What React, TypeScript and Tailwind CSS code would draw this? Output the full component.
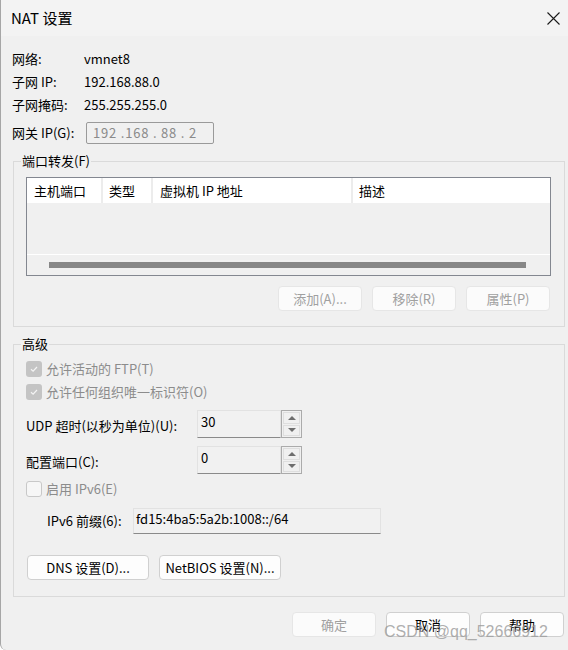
import React from 'react';

const font = { fontFamily: '"Noto Sans CJK SC", "Noto Sans", sans-serif' };

function Btn({ label, w, disabled }: { label: string; w: string; disabled?: boolean }) {
	return (
		<div
			className={`${w} h-[25px] flex items-center justify-center rounded-[4px] border text-[13px] ${
				disabled ? 'bg-[#fbfbfb] border-[#e6e6e6] text-[#a0a0a0]' : 'bg-[#fdfdfd] border-[#d0d0d0] text-black'
			}`}
		>
			{label}
		</div>
	);
}

function Check({ checked, label }: { checked?: boolean; label: string }) {
	return (
		<div className="h-[23px] flex items-center gap-[4px]">
			{checked ? (
				<div className="w-[16px] h-[16px] rounded-[3px] bg-[#c4c4c4] flex items-center justify-center">
					<svg width="10" height="10" viewBox="0 0 10 10">
						<path d="M2 5.2 L4.1 7.2 L8 3" fill="none" stroke="#f4f4f4" strokeWidth="1.2" />
					</svg>
				</div>
			) : (
				<div className="w-[16px] h-[16px] rounded-[3px] border border-[#c8c8c8] bg-[#f6f6f6]" />
			)}
			<span className="text-[13px] text-[#8c8c8c]">{label}</span>
		</div>
	);
}

function Spin({ value }: { value: string }) {
	return (
		<div className="flex h-[28px]">
			<div className="w-[84px] h-full border border-[#e2e2e2] border-b-[#8a8a8a] bg-[#f1f1f1] pl-[3px] pt-[2px] text-[13px] leading-[18px]">
				{value}
			</div>
			<div className="w-[21px] h-full border border-[#ababab] p-px flex flex-col gap-px">
				<div className="flex-1 border border-[#dedede] bg-[#f0f0f0] flex items-center justify-center">
					<svg width="8" height="5" viewBox="0 0 8 5">
						<path d="M0 5 L4 1 L8 5 Z" fill="#6e6e6e" />
					</svg>
				</div>
				<div className="flex-1 border border-[#dedede] bg-[#f0f0f0] flex items-center justify-center">
					<svg width="8" height="5" viewBox="0 0 8 5">
						<path d="M0 0 L8 0 L4 4 Z" fill="#6e6e6e" />
					</svg>
				</div>
			</div>
		</div>
	);
}

export default function App() {
	return (
		<div className="w-[568px] h-[650px] bg-[#f0f0f0] relative overflow-hidden text-black border-l border-[#a6a6a6] rounded-bl-[6px]" style={font}>
			{/* 标题栏 */}
			<div className="h-[36px] bg-[#f3f3f3] flex items-center justify-between pl-[10px] pr-[8px]">
				<span className="text-[15px]">NAT 设置</span>
				<svg width="13" height="13" viewBox="0 0 13 13">
					<path d="M0.5 0.5 L12.5 12.5 M12.5 0.5 L0.5 12.5" stroke="#1a1a1a" strokeWidth="1.1" />
				</svg>
			</div>

			<div className="pl-[11px] text-[13px]">
				<div className="mt-[11px] h-[23px] flex items-center">
					<span className="w-[72px]">网络:</span>
					<span>vmnet8</span>
				</div>
				<div className="h-[23px] flex items-center">
					<span className="w-[72px]">子网 IP:</span>
					<span>192.168.88.0</span>
				</div>
				<div className="h-[24px] flex items-center">
					<span className="w-[72px]">子网掩码:</span>
					<span>255.255.255.0</span>
				</div>
				<div className="mt-[5px] h-[22px] flex items-center">
					<span className="w-[74px]">网关 IP(G):</span>
					<div className="w-[128px] h-[22px] border border-[#9a9a9a] rounded-[2px] bg-[#f0f0f0] pl-[6px] flex items-center text-[#8a8a8a] tracking-[0.8px]">
						192 .168 . 88 . 2
					</div>
				</div>
			</div>

			{/* 端口转发 */}
			<div className="mt-[17px] ml-[12px] w-[552px] h-[166px] border border-[#dadada] relative">
				<span className="absolute -top-[11px] left-[7px] px-[1px] bg-[#f0f0f0] text-[13px] leading-[20px]">端口转发(F)</span>
				<div className="ml-[12px] mt-[15px] w-[525px] h-[99px] border border-[#838790] bg-[#f0f0f0] flex flex-col">
					<div className="h-[25px] bg-white flex text-[13px]">
						<div className="w-[76px] pl-[7px] flex items-center border-r-2 border-[#ececec]">主机端口</div>
						<div className="w-[50px] pl-[6px] flex items-center border-r-2 border-[#ececec]">类型</div>
						<div className="w-[200px] pl-[7px] flex items-center border-r-2 border-[#ececec]">虚拟机 IP 地址</div>
						<div className="flex-1 pl-[6px] flex items-center">描述</div>
					</div>
					<div className="h-[51px]" />
					<div className="h-px bg-white" />
					<div className="flex-1 flex items-center pl-[22px]">
						<div className="w-[477px] h-[6px] bg-[#878787]" />
					</div>
				</div>
				<div className="mt-[10px] mr-[14px] flex justify-end gap-[10px]">
					<Btn label="添加(A)..." w="w-[84px]" disabled />
					<Btn label="移除(R)" w="w-[84px]" disabled />
					<Btn label="属性(P)" w="w-[84px]" disabled />
				</div>
			</div>

			{/* 高级 */}
			<div className="mt-[17px] ml-[12px] w-[552px] h-[253px] border border-[#dadada] relative">
				<span className="absolute -top-[11px] left-[7px] px-[1px] bg-[#f0f0f0] text-[13px] leading-[20px]">高级</span>
				<div className="pl-[12px] pt-[12px] flex flex-col">
					<Check checked label="允许活动的 FTP(T)" />
					<Check checked label="允许任何组织唯一标识符(O)" />
					<div className="mt-[7px] h-[28px] flex items-center text-[13px]">
						<span className="w-[171px] pt-[4px]">UDP 超时(以秒为单位)(U):</span>
						<Spin value="30" />
					</div>
					<div className="mt-[8px] h-[28px] flex items-center text-[13px]">
						<span className="w-[171px] pt-[4px]">配置端口(C):</span>
						<Spin value="0" />
					</div>
					<div className="mt-[3px]">
						<Check label="启用 IPv6(E)" />
					</div>
					<div className="mt-[8px] ml-[21px] h-[26px] flex items-center text-[13px]">
						<span className="w-[86px]">IPv6 前缀(6):</span>
						<div className="w-[248px] h-[26px] border border-[#e2e2e2] border-b-[#8a8a8a] bg-[#f1f1f1] pl-[2px] pt-[1px] leading-[18px]">
							fd15:4ba5:5a2b:1008::/64
						</div>
					</div>
					<div className="mt-[21px] ml-[1px] flex gap-[10px]">
						<Btn label="DNS 设置(D)..." w="w-[122px]" />
						<Btn label="NetBIOS 设置(N)..." w="w-[122px]" />
					</div>
				</div>
			</div>

			{/* 底部按钮 */}
			<div className="mt-[15px] pr-[4px] flex justify-end gap-[10px]">
				<Btn label="确定" w="w-[84px]" disabled />
				<Btn label="取消" w="w-[84px]" />
				<Btn label="帮助" w="w-[84px]" />
			</div>

			<span
				className="absolute left-[383px] top-[622px] whitespace-nowrap text-[16px] leading-[20px] text-[#9a9a9a]/80"
				style={{ fontFamily: '"Liberation Sans", sans-serif' }}
			>
				CSDN @qq_52666912
			</span>
		</div>
	);
}
